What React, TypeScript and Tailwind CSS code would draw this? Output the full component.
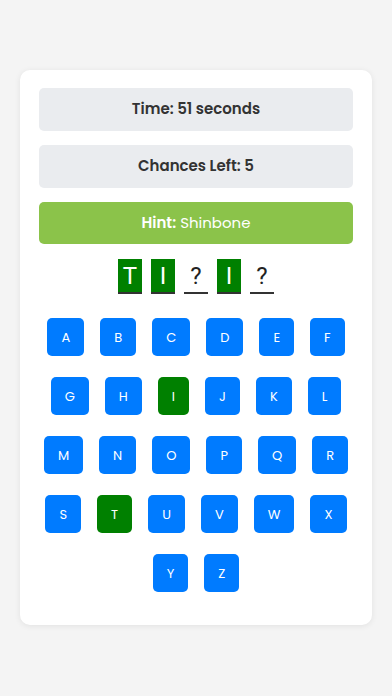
import React from "react";

const ROWS: string[][] = [
  ["A", "B", "C", "D", "E", "F"],
  ["G", "H", "I", "J", "K", "L"],
  ["M", "N", "O", "P", "Q", "R"],
  ["S", "T", "U", "V", "W", "X"],
  ["Y", "Z"],
];

const WORD = ["T", "I", "?", "I", "?"];
const GUESSED = ["I", "T"];

function WordSlot({ letter }: { letter: string }): JSX.Element {
  const found = letter !== "?";
  return (
    <div
      className={`w-[24px] h-[35px] flex items-center justify-center border-b-2 border-[#333] text-[24px] leading-none ${
        found ? "bg-[#008000] text-white" : "text-[#222]"
      }`}
      style={{ fontFamily: "Roboto, 'Noto Sans', sans-serif" }}
    >
      {letter}
    </div>
  );
}

function KeyButton({ letter }: { letter: string }): JSX.Element {
  const used = GUESSED.includes(letter);
  return (
    <button
      className={`h-[38px] min-w-[31px] px-[14px] rounded-[5px] text-[13px] text-white leading-none ${
        used ? "bg-[#008000]" : "bg-[#007bff]"
      }`}
    >
      {letter}
    </button>
  );
}

export default function App(): JSX.Element {
  return (
    <div
      className="min-h-[696px] bg-[#f4f4f4] px-5 pt-[70px]"
      style={{ fontFamily: "Poppins, Inter, 'Noto Sans', sans-serif" }}
    >
      <div className="bg-white rounded-[10px] shadow-[0_1px_6px_rgba(0,0,0,0.08)] px-[19px] pt-[18px] pb-[33px]">
        {/* Status boxes */}
        <div className="flex flex-col gap-[14px]">
          <div className="h-[43px] rounded-[5px] bg-[#eaecef] flex items-center justify-center text-[15px] font-semibold text-[#333]">
            Time: 51 seconds
          </div>
          <div className="h-[43px] rounded-[5px] bg-[#eaecef] flex items-center justify-center text-[15px] font-semibold text-[#333]">
            Chances Left: 5
          </div>
          <div className="h-[42px] rounded-[5px] bg-[#8bc34a] flex items-center justify-center text-[15px] text-white">
            <span className="font-semibold">Hint:</span>
            <span className="ml-1">Shinbone</span>
          </div>
        </div>

        {/* Word */}
        <div className="mt-[15px] flex justify-center gap-[9px]">
          {WORD.map((l, i) => (
            <WordSlot key={i} letter={l} />
          ))}
        </div>

        {/* Keyboard */}
        <div className="mt-[24px] flex flex-col gap-[21px]">
          {ROWS.map((row, idx) => (
            <div key={idx} className="flex justify-center gap-[16px]">
              {row.map((l) => (
                <KeyButton key={l} letter={l} />
              ))}
            </div>
          ))}
        </div>
      </div>
    </div>
  );
}
